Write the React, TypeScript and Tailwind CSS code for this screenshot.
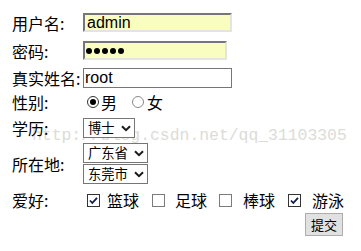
const cjk = "font-['Noto_Sans_CJK_SC','Microsoft_YaHei',sans-serif]"

function Chevron() {
  return (
    <svg width="10" height="7" viewBox="0 0 10 7" className="shrink-0">
      <path d="M1 1.2 L5 5.2 L9 1.2" fill="none" stroke="#1a1a1a" strokeWidth="2" />
    </svg>
  )
}

function Select({ label, width }: { label: string; width: string }) {
  return (
    <div
      className={`${width} h-[20px] border border-[#767676] bg-white flex items-center justify-between pl-[4px] pr-[3px] text-[13.3px] leading-none text-black ${cjk}`}
    >
      <span>{label}</span>
      <Chevron />
    </div>
  )
}

function Radio({ checked }: { checked?: boolean }) {
  return (
    <span
      className={`w-[12px] h-[12px] rounded-full border bg-white flex items-center justify-center shrink-0 ${
        checked ? 'border-[#333]' : 'border-[#8a8a8a]'
      }`}
    >
      {checked && <span className="w-[6px] h-[6px] rounded-full bg-black" />}
    </span>
  )
}

function Checkbox({ checked }: { checked?: boolean }) {
  return (
    <svg width="13" height="13" viewBox="0 0 13 13" className="shrink-0">
      <rect x="0.5" y="0.5" width="12" height="12" fill="white" stroke={checked ? '#333' : '#7a7a7a'} />
      {checked && (
        <path d="M3 6.5 L5.3 9 L10 3.8" fill="none" stroke="#0f1b4a" strokeWidth="1.8" />
      )}
    </svg>
  )
}

function Label({ children }: { children: string }) {
  return <div className="w-[71px] shrink-0 text-[16px] leading-none text-black">{children}</div>
}

export default function App() {
  return (
    <div className={`relative z-0 w-[361px] h-[251px] bg-white overflow-hidden ${cjk}`}>
      <div className="absolute -z-10 left-[32px] top-[128px] text-[16.4px] leading-none text-[#dcdcd8] font-['Liberation_Mono','Courier_New',monospace] whitespace-nowrap pointer-events-none">
        http://blog.csdn.net/qq_31103305
      </div>

      <div className="flex flex-col pl-[12px] pt-[13px]">
        <div className="flex items-center h-[19px]">
          <Label>用户名:</Label>
          <div className="w-[149px] h-[19px] bg-[#fafdc0] border-2 border-t-[#767676] border-l-[#767676] border-r-[#e4e4e4] border-b-[#e4e4e4] flex items-center pl-[2px] text-[16px] leading-none text-black font-['Liberation_Sans',Arial,sans-serif]">
            admin
          </div>
        </div>

        <div className="flex items-center h-[19px] mt-[9px]">
          <Label>密码:</Label>
          <div className="w-[144px] h-[19px] bg-[#fafdc0] border-2 border-t-[#767676] border-l-[#767676] border-r-[#e4e4e4] border-b-[#e4e4e4] flex items-center gap-[2px] pl-[1px]">
            {[0, 1, 2, 3, 4].map((i) => (
              <span key={i} className="w-[6px] h-[6px] rounded-full bg-black" />
            ))}
          </div>
        </div>

        <div className="flex items-center h-[20px] mt-[8px]">
          <Label>真实姓名:</Label>
          <div className="w-[149px] h-[20px] bg-white border border-[#767676] flex items-center pl-[1px] text-[16px] leading-none text-black font-['Liberation_Sans',Arial,sans-serif]">
            root
          </div>
        </div>

        <div className="flex items-center h-[22px] mt-[3px]">
          <Label>性别:</Label>
          <div className="flex items-center text-[16px] leading-none">
            <span className="ml-[4px]"><Radio checked /></span>
            <span className="ml-[2px]">男</span>
            <span className="ml-[15px]"><Radio /></span>
            <span className="ml-[3px]">女</span>
          </div>
        </div>

        <div className="flex items-center h-[20px] mt-[5px]">
          <Label>学历:</Label>
          <Select label="博士" width="w-[52px]" />
        </div>

        <div className="flex items-center mt-[5px]">
          <Label>所在地:</Label>
          <div className="flex flex-col gap-[1px]">
            <Select label="广东省" width="w-[65px]" />
            <Select label="东莞市" width="w-[65px]" />
          </div>
        </div>

        <div className="flex items-center h-[20px] mt-[6px]">
          <Label>爱好:</Label>
          <div className="flex items-center text-[16px] leading-none">
            <span className="ml-[4px]"><Checkbox checked /></span>
            <span className="ml-[7px]">篮球</span>
            <span className="ml-[13px]"><Checkbox /></span>
            <span className="ml-[10px]">足球</span>
            <span className="ml-[12px]"><Checkbox /></span>
            <span className="ml-[11px]">棒球</span>
            <span className="ml-[13px]"><Checkbox checked /></span>
            <span className="ml-[11px]">游泳</span>
          </div>
        </div>

        <div className="flex h-[23px] mt-[3px] pl-[293px]">
          <button className="w-[38px] h-[23px] bg-[#e1e1e1] border border-[#adadad] text-[13px] leading-none text-black flex items-center justify-center">
            提交
          </button>
        </div>
      </div>
    </div>
  )
}
